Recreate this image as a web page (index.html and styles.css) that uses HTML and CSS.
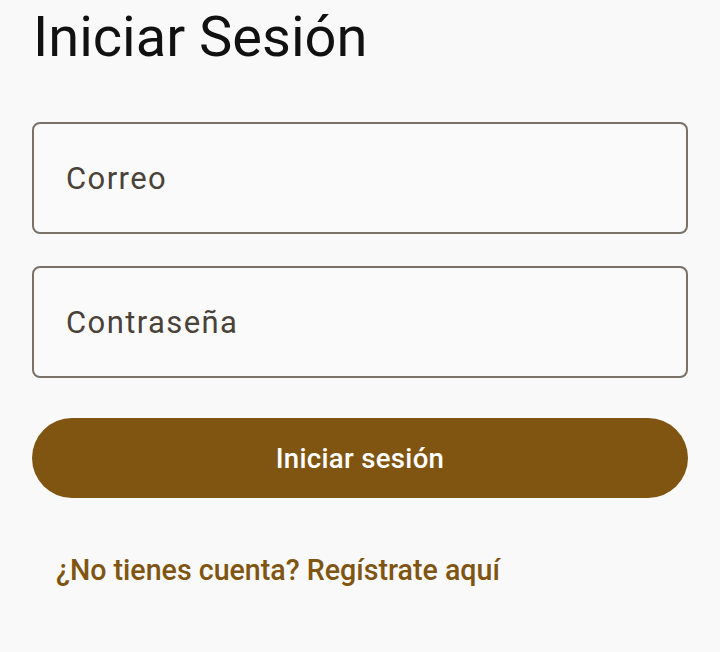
FILE: index.html
```html
<!DOCTYPE html>
<html lang="es">
<head>
<meta charset="utf-8">
<link rel="stylesheet" href="styles.css">
</head>
<body>
<main class="screen">
  <h1 class="title">Iniciar Sesión</h1>
  <form class="form">
    <div class="field"><span class="placeholder">Correo</span></div>
    <div class="field"><span class="placeholder">Contraseña</span></div>
    <button type="button" class="btn">Iniciar sesión</button>
    <a class="link" href="#">¿No tienes cuenta? Regístrate aquí</a>
  </form>
</main>
</body>
</html>
```
FILE: styles.css
```css
html, body {
  margin: 0;
  padding: 0;
  background: #f9f9f9;
  font-family: Roboto, "Noto Sans", sans-serif;
}
.screen {
  width: 720px;
  height: 652px;
  box-sizing: border-box;
  padding: 0 32px;
  overflow: hidden;
}
.title {
  margin: 0;
  padding-top: 4px;
  font-size: 56px;
  font-weight: 400;
  line-height: 66px;
  color: #111;
  padding-left: 1px;
}
.form {
  display: flex;
  flex-direction: column;
  margin-top: 52px;
}
.field {
  box-sizing: border-box;
  height: 112px;
  border: 2px solid #7a7268;
  border-radius: 8px;
  display: flex;
  align-items: center;
  padding-left: 32px;
  margin-bottom: 32px;
  background: #fafafa;
}
.placeholder {
  font-size: 31px;
  color: #4a4238;
  letter-spacing: 1.4px;
}
.btn {
  margin-top: 8px;
  height: 80px;
  border: none;
  border-radius: 40px;
  background: #7f5511;
  color: #fff;
  font-family: Roboto, "Noto Sans", sans-serif;
  font-size: 27.6px;
  font-weight: 500;
  letter-spacing: 0.3px;
}
.link {
  margin-top: 56px;
  margin-left: 24px;
  font-size: 28.6px;
  font-weight: 500;
  color: #7f5511;
  text-decoration: none;
  line-height: 32px;
}
```
